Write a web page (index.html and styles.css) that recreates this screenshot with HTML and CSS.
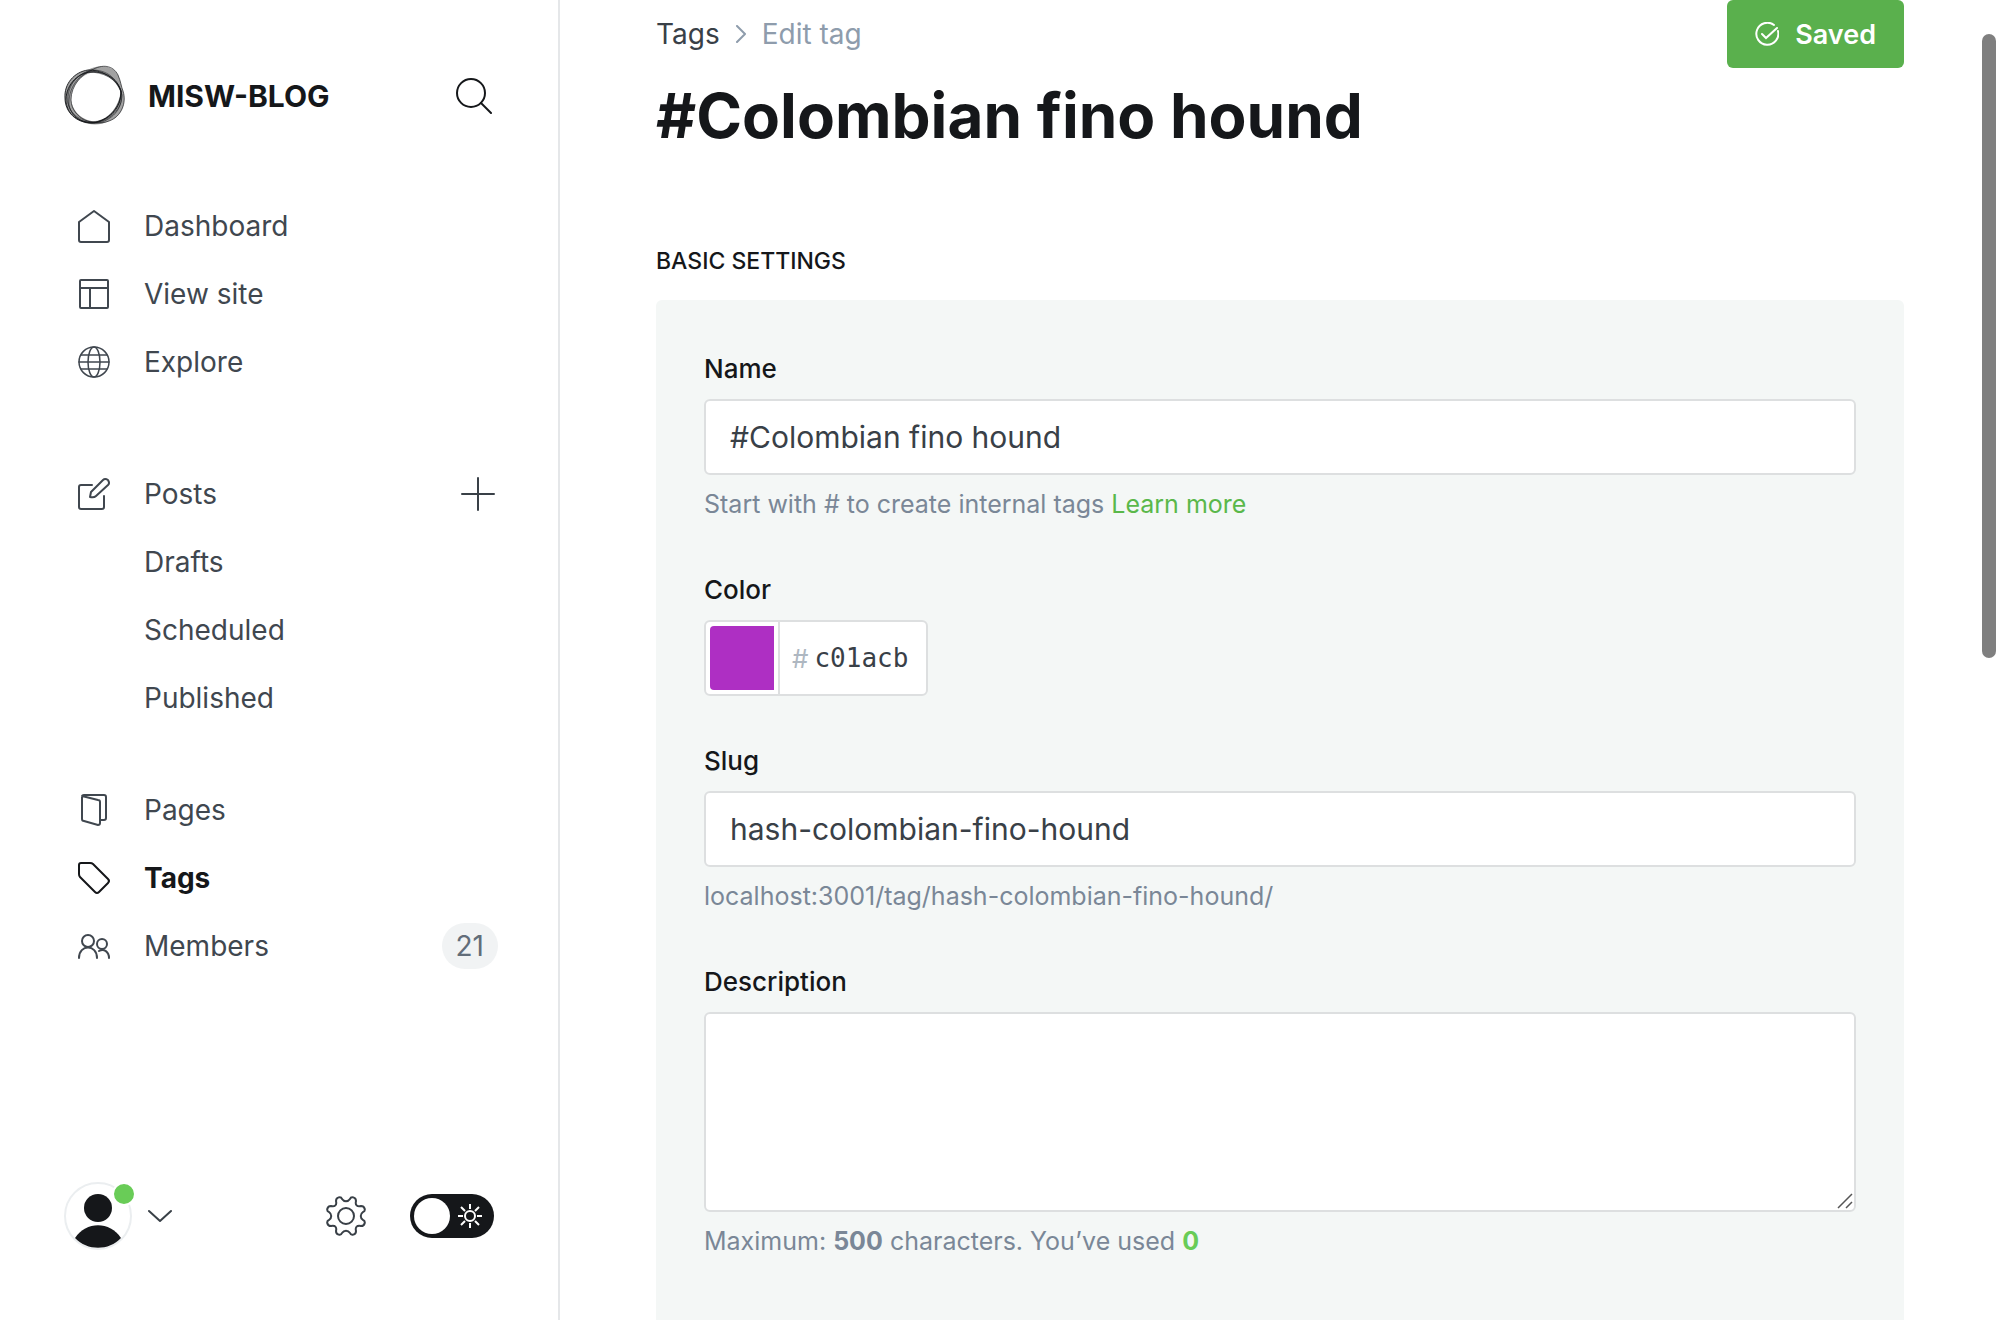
FILE: index.html
```html
<!DOCTYPE html>
<html lang="en">
<head>
<meta charset="utf-8">
<title>Edit tag - MISW-BLOG</title>
<link rel="stylesheet" href="styles.css">
</head>
<body>
<div class="app">
  <aside class="sidebar">
    <header class="brand">
      <svg class="brand-logo" viewBox="0 0 62 62" fill="none" stroke="#15171a" stroke-width=".9">
        <path fill="#555" fill-opacity=".55" fill-rule="evenodd" stroke="none" d="M1 33C0 19 10 7 24 5 34 -1 49 0 54 10 57 17 57 21 59 26 63 38 57 52 45 56 32 63 16 59 8 49 3 43 1 38 1 33ZM7 35C8 46 20 57 31 56 44 55 56 42 57 28 55 16 44 8 34 7 18 7 7 20 7 35Z"/>
        <path d="M1 33C0 19 10 7 24 5 36 5 50 10 57 26 57 42 44 57 28 58 12 58 1 47 1 33Z"/>
        <path d="M7 35C7 20 18 9 28 5 38 -1 49 0 54 10 57 17 57 21 59 26 63 38 57 52 45 56 30 62 8 54 7 35Z" stroke-opacity=".75"/>
        <path d="M4 34C4 20 13 9 28 5 45 5 54 15 58 30 58 44 46 56 30 58 14 58 4 48 4 34Z" stroke-opacity=".6"/>
        <path d="M2 37C1 22 12 8 27 7 43 6 56 16 57 28 57 42 47 54 32 57 17 59 4 51 2 37Z"/>
        <path d="M5 40C4 24 14 10 25 7 38 7 52 13 57 25 60 40 52 52 38 57 23 61 8 54 5 40Z" stroke-opacity=".6"/>
        <path d="M3 30C5 18 14 10 24 6 40 6 52 14 57 27 56 40 46 54 32 57 12 57 2 44 3 30Z" stroke-opacity=".5"/>
      </svg>
      <span class="brand-name">MISW-BLOG</span>
      <button class="icon-button" type="button" aria-label="Search">
        <svg class="icon-search" viewBox="0 0 36 36" fill="none" stroke="currentColor" stroke-width="2" stroke-linecap="round"><circle cx="15" cy="15" r="14"/><path d="M25 25 35 35"/></svg>
      </button>
    </header>

    <nav class="nav" aria-label="Main">
      <ul class="nav-group">
        <li><a class="nav-link" href="#dashboard"><svg class="icon" viewBox="0 0 32 32"><path d="M1 12 16 1 31 12V30Q31 32 29 32H3Q1 32 1 30Z"/></svg>Dashboard</a></li>
        <li><a class="nav-link" href="#site"><svg class="icon" viewBox="0 0 32 32"><rect x="2" y="2" width="28" height="28" rx="1"/><path d="M2 10H30M12 10V30"/></svg>View site</a></li>
        <li><a class="nav-link" href="#explore"><svg class="icon icon-fine" viewBox="0 0 32 32"><circle cx="16" cy="16" r="15"/><ellipse cx="16" cy="16" rx="6" ry="15"/><path d="M1 16H31M3 9H29M3 23H29"/></svg>Explore</a></li>
      </ul>
      <ul class="nav-group nav-posts">
        <li class="nav-row"><a class="nav-link" href="#posts"><svg class="icon" viewBox="0 0 32 32"><path d="M14 7H3Q1 7 1 9V29Q1 31 3 31H24Q26 31 26 29V18M12 19 13 14 25 2Q27 0 30 2 32 5 30 7L18 18Q16 20 12 19Z"/></svg>Posts</a>
          <button class="icon-button new-post" type="button" aria-label="New post"><svg class="icon-plus" viewBox="0 0 34 34" fill="none" stroke="currentColor" stroke-width="2" stroke-linecap="round"><path d="M17 1V33M1 17H33"/></svg></button></li>
        <li><a class="nav-link nav-sub" href="#drafts">Drafts</a></li>
        <li><a class="nav-link nav-sub" href="#scheduled">Scheduled</a></li>
        <li><a class="nav-link nav-sub" href="#published">Published</a></li>
      </ul>
      <ul class="nav-group">
        <li><a class="nav-link" href="#pages"><svg class="icon" viewBox="0 0 32 32"><path d="M6 1H26Q28 1 28 3V24Q28 26 26 26H22M6 1Q4 1 4 3V25Q4 27 6 27L20 31Q22 31 22 29V8Q22 6 20 6L4 2"/></svg>Pages</a></li>
        <li><a class="nav-link is-active" href="#tags" aria-current="page"><svg class="icon" viewBox="0 0 32 32"><path d="M3 1H12Q14 1 15 2L30 17Q32 19 30 21L21 30Q19 32 17 30L2 15Q1 14 1 12V3Q1 1 3 1Z"/></svg>Tags</a></li>
        <li class="nav-row"><a class="nav-link" href="#members"><svg class="icon" viewBox="0 0 32 32"><circle cx="10" cy="11" r="6"/><circle cx="24" cy="14" r="5"/><path d="M1 28C1 14 19 14 19 28M21 21C26 18 31 22 31 28"/></svg>Members</a><span class="count">21</span></li>
      </ul>
    </nav>

    <footer class="account">
      <button class="account-menu" type="button" aria-label="Account">
        <span class="avatar">
          <svg viewBox="0 0 68 68"><circle cx="34" cy="34" r="33" fill="#fff" stroke="#ebeef0" stroke-width="2"/><circle cx="34" cy="26" r="14" fill="#15171a"/><path d="M11 56C22 39 46 39 57 56 45 69 23 69 11 56Z" fill="#15171a"/></svg>
          <span class="avatar-dot"></span>
        </span>
        <svg class="chevron" viewBox="0 0 24 14" fill="none" stroke="currentColor" stroke-width="2" stroke-linecap="round" stroke-linejoin="round"><path d="M1 2 12 12 23 2"/></svg>
      </button>
      <button class="icon-button gear" type="button" aria-label="Settings">
        <svg viewBox="0 0 40 40" fill="none" stroke="currentColor" stroke-width="2" stroke-linejoin="round"><circle cx="20" cy="20" r="8"/><path d="M16 3C18 6 22 6 24 3 25 0 30 1 30 5 29 9 31 11 35 10 39 10 40 15 37 16 34 18 34 22 37 24 40 25 39 30 35 30 31 29 29 31 30 35 30 39 25 40 24 37 22 34 18 34 16 37 15 40 10 39 10 35 11 31 9 29 5 30 1 30 0 25 3 24 6 22 6 18 3 16 0 15 1 10 5 10 9 11 11 9 10 5 10 1 15 0 16 3Z"/></svg>
      </button>
      <label class="switch">
        <input class="switch-input" type="checkbox" aria-label="Dark mode">
        <svg class="sun" viewBox="0 0 24 24" fill="none" stroke="#fff" stroke-width="2"><circle cx="12" cy="12" r="5"/><path d="M12 0V5M12 19V24M0 12H5M19 12H24M3 3 7 7M17 17 21 21M21 3 17 7M7 17 3 21"/></svg>
      </label>
    </footer>
  </aside>

  <main class="main">
    <header class="page-header">
      <div>
        <nav class="breadcrumb" aria-label="Breadcrumb">
          <a class="breadcrumb-link" href="#tags">Tags</a>
          <svg class="breadcrumb-arrow" viewBox="0 0 12 18" fill="none" stroke="currentColor" stroke-width="2" stroke-linecap="round" stroke-linejoin="round"><path d="M2 1 10 9 2 17"/></svg>
          <span>Edit tag</span>
        </nav>
        <h1 class="page-title">#Colombian fino hound</h1>
      </div>
      <button class="save" type="button"><svg class="save-icon" viewBox="0 0 24 24" fill="none" stroke="currentColor" stroke-width="2" stroke-linecap="round"><path d="M19 3A11 11 0 1 0 23 9M7 12 11 16 22 6"/></svg>Saved</button>
    </header>

    <h2 class="section-title">BASIC SETTINGS</h2>
    <form class="panel">
      <div class="field">
        <label class="label" for="name">Name</label>
        <input class="input" id="name" type="text" value="#Colombian fino hound">
        <p class="help">Start with # to create internal tags <a class="help-link" href="#learn">Learn more</a></p>
      </div>
      <div class="field">
        <label class="label" for="color">Color</label>
        <div class="color-box">
          <span class="swatch-cell"><span class="swatch"></span></span>
          <span class="hash">#</span>
          <input class="color-input" id="color" type="text" value="c01acb">
        </div>
      </div>
      <div class="field">
        <label class="label" for="slug">Slug</label>
        <input class="input" id="slug" type="text" value="hash-colombian-fino-hound">
        <p class="help">localhost:3001/tag/hash-colombian-fino-hound/</p>
      </div>
      <div class="field">
        <label class="label" for="description">Description</label>
        <div class="textarea-wrap">
          <textarea class="input textarea" id="description"></textarea>
          <svg class="grip" viewBox="0 0 16 16" stroke="#555" stroke-width="1.5"><path d="M1 15 15 1M9 15 15 9"/></svg>
        </div>
        <p class="help">Maximum: <b>500</b> characters. You’ve used <b class="used">0</b></p>
      </div>
    </form>
    <div class="scroll-thumb"></div>
  </main>
</div>
</body>
</html>
```
FILE: styles.css
```css
*, *::before, *::after { box-sizing: border-box; }
body { margin: 0; background: #fff; color: #15171a; font-family: Inter, sans-serif; font-size: 28px; }
ul, p, h1, h2 { margin: 0; padding: 0; }
ul { list-style: none; }
a { color: inherit; text-decoration: none; }
button { margin: 0; padding: 0; border: 0; background: none; color: inherit; font: inherit; cursor: pointer; }
svg { display: block; flex: none; }

.app { display: grid; grid-template-columns: 560px 1fr; height: 100vh; overflow: hidden; }

/* Sidebar */
.sidebar { display: flex; flex-direction: column; padding: 64px 60px 70px 64px; border-right: 2px solid #e5e7e9; }
.brand { display: flex; align-items: center; height: 64px; margin-bottom: 64px; padding-right: 6px; }
.brand-logo { width: 62px; height: 62px; margin-right: 22px; }
.brand-name { flex: 1; font-size: 30px; font-weight: 700; }
.icon-search { width: 36px; height: 36px; }
.nav { flex: 1; }
.nav-group { margin-bottom: 64px; }
.nav-posts { margin-bottom: 44px; }
.nav-row { display: flex; align-items: center; justify-content: space-between; }
.new-post { margin-right: 3px; color: #394047; }
.nav-link { display: flex; align-items: center; gap: 34px; height: 68px; padding-left: 14px; color: #40474f; }
.nav-sub { padding-left: 80px; }
.is-active { color: #15171a; font-weight: 700; }
.icon { width: 32px; height: 32px; fill: none; stroke: currentColor; stroke-width: 2; stroke-linejoin: round; stroke-linecap: round; overflow: visible; }
.icon-fine { stroke-width: 1.5; }
.icon-plus { width: 34px; height: 34px; }
.count { padding: 0 14px; border-radius: 24px; background: #f1f3f4; color: #626d79; font-size: 28px; line-height: 46px; }
.account { display: flex; align-items: center; color: #394047; }
.account-menu { display: flex; align-items: center; gap: 16px; margin-right: auto; }
.avatar { position: relative; width: 68px; height: 68px; }
.avatar-dot { position: absolute; top: 0; right: -4px; width: 24px; height: 24px; border: 2px solid #fff; border-radius: 50%; background: #69cc57; }
.chevron { width: 24px; height: 14px; }
.gear { width: 40px; height: 40px; margin-right: 44px; }
.switch { position: relative; width: 84px; height: 44px; margin-right: 4px; }
.switch-input { display: block; appearance: none; width: 84px; height: 44px; margin: 0; padding: 4px; border-radius: 22px; background: #15171a; }
.switch-input::before { content: ""; display: block; width: 36px; height: 36px; border-radius: 50%; background: #fff; }
.sun { position: absolute; top: 10px; right: 12px; width: 24px; height: 24px; }

/* Main column */
.main { position: relative; display: flex; flex-direction: column; padding: 0 96px; }
.page-header { display: flex; justify-content: space-between; align-items: flex-start; margin-bottom: 83px; }
.breadcrumb { display: flex; align-items: center; height: 68px; gap: 15px; color: #8e9cac; }
.breadcrumb-link { color: #394047; }
.breadcrumb-arrow { width: 12px; height: 18px; }
.page-title { font-size: 62px; font-weight: 700; line-height: 96px; }
.save { display: flex; align-items: center; gap: 16px; height: 68px; padding: 0 28px; border-radius: 6px; background: #5ab04d; color: #fff; font-size: 27px; font-weight: 600; }
.save-icon { width: 24px; height: 24px; }
.section-title { margin-bottom: 25px; font-size: 23px; font-weight: 500; line-height: 28px; }
.panel { flex: 1; display: flex; flex-direction: column; gap: 47px; padding: 51px 48px; border-radius: 6px 6px 0 0; background: #f4f7f6; }
.label { display: block; width: max-content; margin-bottom: 12px; font-size: 26px; font-weight: 500; line-height: 36px; }
.input { display: block; width: 100%; height: 76px; padding: 0 24px; border: 2px solid #dddfe0; border-radius: 6px; background: #fff; color: #394047; font: 30px Inter, sans-serif; outline: 0; }
.help { margin-top: 8px; color: #7a8797; font-size: 25px; line-height: 42px; }
.help-link { color: #5ab84a; }
.used { color: #69cc57; }
.color-box { display: flex; align-items: center; width: 224px; height: 76px; border: 2px solid #dddfe0; border-radius: 6px; background: #fff; }
.swatch-cell { height: 72px; padding: 4px; border-right: 2px solid #dddfe0; }
.swatch { display: block; width: 64px; height: 64px; border-radius: 4px 0 0 4px; background: #ae2fc3; }
.hash { margin-left: 12px; color: #aeb7c1; font-size: 26px; }
.color-input { width: 108px; margin-left: 6px; padding: 0; border: 0; background: none; color: #394047; font: 26px "DejaVu Sans Mono", monospace; outline: 0; }
.textarea-wrap { position: relative; }
.textarea { height: 200px; padding: 16px 24px; resize: none; }
.grip { position: absolute; right: 3px; bottom: 3px; width: 16px; height: 16px; }
.scroll-thumb { position: absolute; top: 34px; right: 4px; width: 14px; height: 624px; border-radius: 7px; background: #7f7f7f; }
```
